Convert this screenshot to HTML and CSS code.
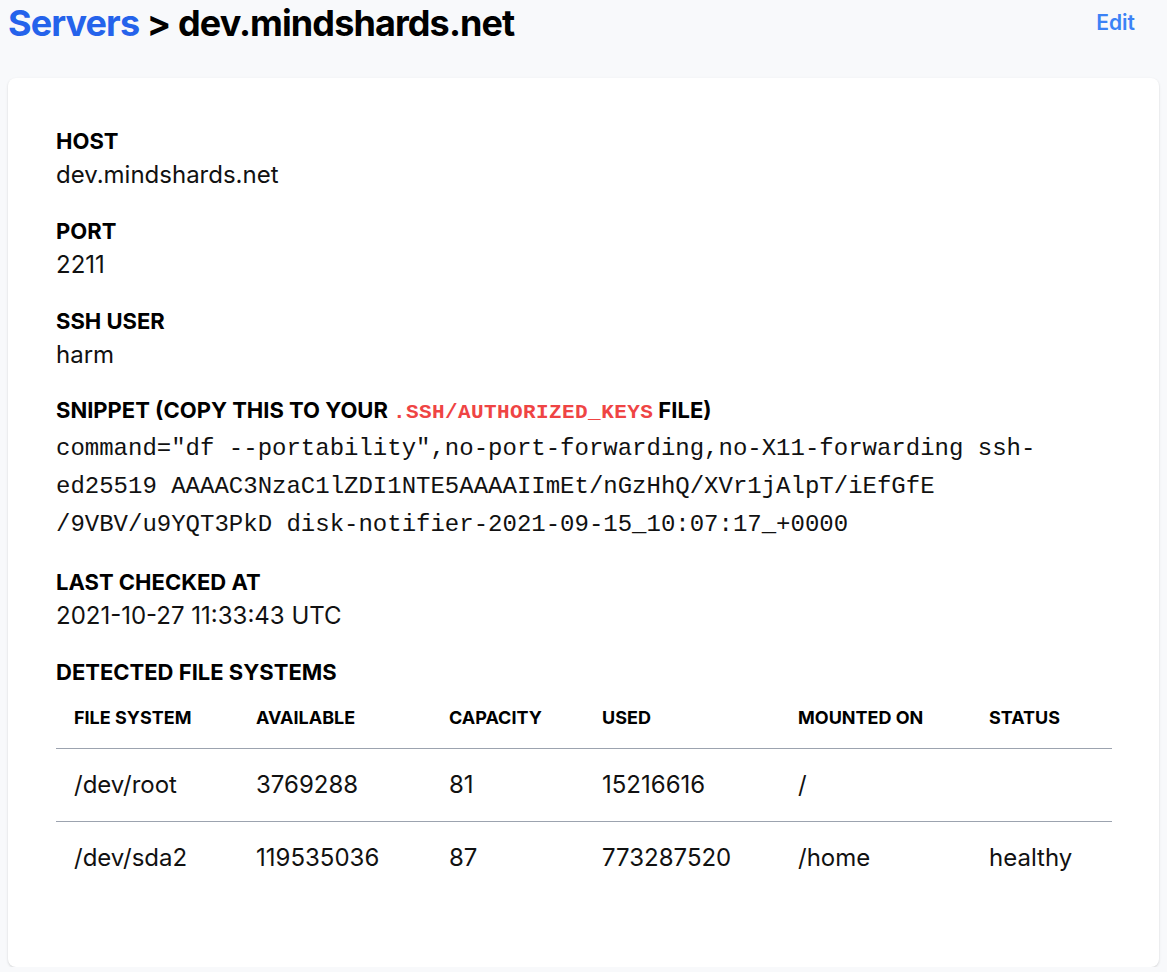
FILE: index.html
```html
<!DOCTYPE html>
<html lang="en">
<head>
<meta charset="utf-8">
<title>dev.mindshards.net</title>
<link rel="stylesheet" href="styles.css">
</head>
<body>
<header class="page-header">
  <h1 class="title"><a class="crumb" href="#">Servers</a> &gt; dev.mindshards.net</h1>
  <a class="edit" href="#">Edit</a>
</header>
<main class="card">
  <dl class="fields">
    <div class="field">
      <dt class="label">Host</dt>
      <dd class="value">dev.mindshards.net</dd>
    </div>
    <div class="field">
      <dt class="label">Port</dt>
      <dd class="value">2211</dd>
    </div>
    <div class="field">
      <dt class="label">SSH User</dt>
      <dd class="value">harm</dd>
    </div>
    <div class="field field-code">
      <dt class="label">Snippet (copy this to your <code class="inline-code">.ssh/authorized_keys</code> file)</dt>
      <dd class="value code-value">command="df --portability",no-port-forwarding,no-X11-forwarding ssh-<br>ed25519 AAAAC3NzaC1lZDI1NTE5AAAAIImEt/nGzHhQ/XVr1jAlpT/iEfGfE<br>/9VBV/u9YQT3PkD disk-notifier-2021-09-15_10:07:17_+0000</dd>
    </div>
    <div class="field">
      <dt class="label">Last checked at</dt>
      <dd class="value">2021-10-27 11:33:43 UTC</dd>
    </div>
    <div class="field">
      <dt class="label">Detected file systems</dt>
      <dd class="table-wrap">
        <table class="fs-table">
          <thead>
            <tr>
              <th class="c1">File system</th>
              <th class="c2">Available</th>
              <th class="c3">Capacity</th>
              <th class="c4">Used</th>
              <th class="c5">Mounted on</th>
              <th class="c6">Status</th>
            </tr>
          </thead>
          <tbody>
            <tr>
              <td>/dev/root</td>
              <td>3769288</td>
              <td>81</td>
              <td>15216616</td>
              <td>/</td>
              <td></td>
            </tr>
            <tr>
              <td>/dev/sda2</td>
              <td>119535036</td>
              <td>87</td>
              <td>773287520</td>
              <td>/home</td>
              <td>healthy</td>
            </tr>
          </tbody>
        </table>
      </dd>
    </div>
  </dl>
</main>
</body>
</html>
```
FILE: styles.css
```css
* { box-sizing: border-box; }

html, body {
  margin: 0;
  padding: 0;
}

body {
  background: #f8f9fb;
  color: #111827;
  font-family: Inter, "Noto Sans", sans-serif;
  padding: 0 8px;
}

.page-header {
  display: flex;
  justify-content: space-between;
  align-items: center;
  padding: 3px 24px 0 0;
}

.title {
  margin: 0;
  font-size: 36px;
  line-height: 40px;
  font-weight: 700;
  color: #000;
  letter-spacing: -0.9px;
}

.crumb {
  color: #2563eb;
  text-decoration: none;
}

.edit {
  color: #3b82f6;
  font-size: 21px;
  line-height: 28px;
  font-weight: 600;
  text-decoration: none;
}

.card {
  margin-top: 35px;
  background: #fff;
  border-radius: 8px;
  box-shadow: 0 1px 3px rgba(0, 0, 0, 0.1), 0 1px 2px rgba(0, 0, 0, 0.06);
  padding: 49px 48px 49px 48px;
}

.fields {
  margin: 0;
  display: flex;
  flex-direction: column;
  gap: 28px;
}

.field {
  display: flex;
  flex-direction: column;
}

.label {
  font-size: 22px;
  line-height: 28px;
  font-weight: 700;
  text-transform: uppercase;
  color: #000;
}

.value {
  margin: 6px 0 0 0;
  font-size: 24px;
  line-height: 28px;
  color: #111;
}

.inline-code {
  font-family: "Liberation Mono", monospace;
  color: #ef4444;
  font-size: 21px;
  font-weight: 700;
  letter-spacing: 0.4px;
}

.field-code {
  margin-top: -1px;
  margin-bottom: -4px;
}

.code-value {
  margin-top: 3px;
  font-family: "Liberation Mono", monospace;
  font-size: 24px;
  line-height: 38px;
  color: #111;
}

.table-wrap {
  margin: 0 0 24px 0;
}

.fs-table {
  width: 100%;
  border-collapse: collapse;
  table-layout: fixed;
}

.fs-table th {
  text-align: left;
  font-size: 18px;
  line-height: 24px;
  font-weight: 700;
  text-transform: uppercase;
  color: #000;
  padding: 20px 18px 18px 18px;
  border-bottom: 1px solid #9ca3af;
}

.fs-table td {
  font-size: 24px;
  line-height: 28px;
  padding: 22px 18px;
  color: #111;
}

.fs-table tbody tr:first-child td {
  border-bottom: 1px solid #9ca3af;
}

.c1 { width: 182px; }
.c2 { width: 193px; }
.c3 { width: 153px; }
.c4 { width: 196px; }
.c5 { width: 191px; }
.c6 { width: 141px; }
```
